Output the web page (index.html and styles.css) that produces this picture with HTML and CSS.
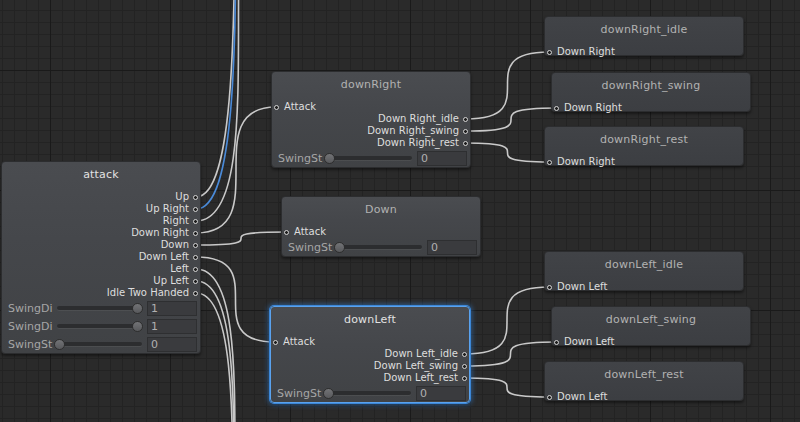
FILE: index.html
```html
<!DOCTYPE html>
<html>
<head>
<meta charset="utf-8">
<link rel="stylesheet" href="styles.css">
</head>
<body>
<div class="canvas">
  <svg class="wires" width="800" height="422" viewBox="0 0 800 422">
    <g fill="none" stroke="#c9c9c9" stroke-width="1.6" stroke-linecap="round">
      <path d="M196,197 C274,197 196,-500 274,-500"/>
      <path d="M196,221 C281,221 196,-179 281,-179"/>
      <path d="M196,233 C276,233 196,107 276,107"/>
      <path d="M196,245 C286,245 196,232 286,232"/>
      <path d="M196,257 C275,257 196,342 275,342"/>
      <path d="M196,269 C274,269 196,650 274,650"/>
      <path d="M196,281 C272,281 196,700 272,700"/>
      <path d="M196,293 C270,293 196,750 270,750"/>
      <path d="M466,119 C549,119 466,52 549,52"/>
      <path d="M466,131 C556,131 466,108 556,108"/>
      <path d="M466,143 C549,143 466,162 549,162"/>
      <path d="M465,354 C549,354 465,287 549,287"/>
      <path d="M465,366 C556,366 465,342 556,342"/>
      <path d="M465,378 C549,378 465,397 549,397"/>
    </g>
    <path d="M196,209 C276,209 196,-450 276,-450" fill="none" stroke="#4a8ad8" stroke-width="1.6"/>
  </svg>

  <div class="node mid n-attack">
    <div class="title bright">attack</div>
    <div class="ports">
      <div class="port out"><span>Up</span><i class="dot"></i></div>
      <div class="port out"><span>Up Right</span><i class="dot"></i></div>
      <div class="port out"><span>Right</span><i class="dot"></i></div>
      <div class="port out"><span>Down Right</span><i class="dot"></i></div>
      <div class="port out"><span>Down</span><i class="dot"></i></div>
      <div class="port out"><span>Down Left</span><i class="dot"></i></div>
      <div class="port out"><span>Left</span><i class="dot"></i></div>
      <div class="port out"><span>Up Left</span><i class="dot"></i></div>
      <div class="port out"><span>Idle Two Handed</span><i class="dot"></i></div>
    </div>
    <div class="prop"><span class="plabel">SwingDi</span><div class="slider"><div class="track"></div><div class="thumb v1"></div></div><div class="field">1</div></div>
    <div class="prop"><span class="plabel">SwingDi</span><div class="slider"><div class="track"></div><div class="thumb v1"></div></div><div class="field">1</div></div>
    <div class="prop"><span class="plabel">SwingSt</span><div class="slider"><div class="track"></div><div class="thumb v0"></div></div><div class="field">0</div></div>
  </div>

  <div class="node mid n-downright">
    <div class="title">downRight</div>
    <div class="ports">
      <div class="port in"><i class="dot"></i><span>Attack</span></div>
      <div class="port out"><span>Down Right_idle</span><i class="dot"></i></div>
      <div class="port out"><span>Down Right_swing</span><i class="dot"></i></div>
      <div class="port out"><span>Down Right_rest</span><i class="dot"></i></div>
    </div>
    <div class="prop"><span class="plabel">SwingSt</span><div class="slider"><div class="track"></div><div class="thumb v0"></div></div><div class="field">0</div></div>
  </div>

  <div class="node mid n-down">
    <div class="title">Down</div>
    <div class="ports">
      <div class="port in"><i class="dot"></i><span>Attack</span></div>
    </div>
    <div class="prop"><span class="plabel">SwingSt</span><div class="slider"><div class="track"></div><div class="thumb v0"></div></div><div class="field">0</div></div>
  </div>

  <div class="node mid n-downleft selected">
    <div class="title bright">downLeft</div>
    <div class="ports">
      <div class="port in"><i class="dot"></i><span>Attack</span></div>
      <div class="port out"><span>Down Left_idle</span><i class="dot"></i></div>
      <div class="port out"><span>Down Left_swing</span><i class="dot"></i></div>
      <div class="port out"><span>Down Left_rest</span><i class="dot"></i></div>
    </div>
    <div class="prop"><span class="plabel">SwingSt</span><div class="slider"><div class="track"></div><div class="thumb v0"></div></div><div class="field">0</div></div>
  </div>

  <div class="node leaf n-dr-idle">
    <div class="title">downRight_idle</div>
    <div class="ports"><div class="port in"><i class="dot"></i><span>Down Right</span></div></div>
  </div>
  <div class="node leaf n-dr-swing">
    <div class="title">downRight_swing</div>
    <div class="ports"><div class="port in"><i class="dot"></i><span>Down Right</span></div></div>
  </div>
  <div class="node leaf n-dr-rest">
    <div class="title">downRight_rest</div>
    <div class="ports"><div class="port in"><i class="dot"></i><span>Down Right</span></div></div>
  </div>
  <div class="node leaf n-dl-idle">
    <div class="title">downLeft_idle</div>
    <div class="ports"><div class="port in"><i class="dot"></i><span>Down Left</span></div></div>
  </div>
  <div class="node leaf n-dl-swing">
    <div class="title">downLeft_swing</div>
    <div class="ports"><div class="port in"><i class="dot"></i><span>Down Left</span></div></div>
  </div>
  <div class="node leaf n-dl-rest">
    <div class="title">downLeft_rest</div>
    <div class="ports"><div class="port in"><i class="dot"></i><span>Down Left</span></div></div>
  </div>
</div>
</body>
</html>
```

FILE: styles.css
```css
html, body {
  margin: 0;
  padding: 0;
  background: #2a2a2a;
}

.canvas {
  position: relative;
  width: 800px;
  height: 422px;
  overflow: hidden;
  font-family: "DejaVu Sans", "Liberation Sans", sans-serif;
  background-color: #2a2a2a;
  background-image:
    linear-gradient(to right, #1a1a1a 1px, transparent 1px),
    linear-gradient(to bottom, #1a1a1a 1px, transparent 1px),
    linear-gradient(to right, #232323 1px, transparent 1px),
    linear-gradient(to bottom, #232323 1px, transparent 1px);
  background-size: 120px 120px, 120px 120px, 12px 12px, 12px 12px;
  background-position: 50px 0, 0 70px, 2px 0, 0 10px;
}

.wires {
  position: absolute;
  left: 0;
  top: 0;
}

/* ---------- nodes ---------- */
.node {
  position: absolute;
  width: 200px;
  box-sizing: border-box;
  border: 1px solid #2c2d2f;
  border-radius: 4px;
  display: flex;
  flex-direction: column;
  box-shadow: 0 2px 3px rgba(0, 0, 0, 0.45);
}

.mid {
  background: linear-gradient(to bottom, #4a4c50 0%, #45474b 40%, #404245 100%);
}

.leaf {
  height: 40px;
  background: linear-gradient(to bottom, #414347 0%, #3c3e42 100%);
}

.selected {
  border-color: #5aa2ee;
  box-shadow: 0 0 0 1px #3b86d6, 0 0 5px 2px rgba(58, 140, 230, 0.5), 0 2px 3px rgba(0, 0, 0, 0.45);
}

.n-attack { left: 1px; top: 161px; }
.n-downright { left: 271px; top: 71px; }
.n-down { left: 281px; top: 196px; }
.n-downleft { left: 270px; top: 306px; }
.n-dr-idle { left: 544px; top: 16px; }
.n-dr-swing { left: 551px; top: 72px; }
.n-dr-rest { left: 544px; top: 126px; }
.n-dl-idle { left: 544px; top: 251px; }
.n-dl-swing { left: 551px; top: 306px; }
.n-dl-rest { left: 544px; top: 361px; }

.title {
  padding-top: 5px;
  height: 16px;
  line-height: 16px;
  margin-bottom: 8px;
  text-align: center;
  font-size: 11px;
  letter-spacing: 0.2px;
  color: #b2b2b2;
  white-space: nowrap;
}

.title.bright {
  color: #e2e2e2;
}

.ports {
  display: flex;
  flex-direction: column;
}

.port {
  height: 12px;
  line-height: 12px;
  font-size: 10px;
  color: #dedede;
  display: flex;
  align-items: center;
  white-space: nowrap;
}

.port.out {
  justify-content: flex-end;
  gap: 4px;
  padding-right: 2px;
}

.port.in {
  gap: 5px;
  padding-left: 2px;
}

.dot {
  display: block;
  width: 5px;
  height: 5px;
  box-sizing: border-box;
  border: 1px solid #d6d6d6;
  border-radius: 50%;
  background: #1e1e1e;
  flex: none;
}

/* ---------- property rows ---------- */
.prop {
  height: 18px;
  display: flex;
  align-items: center;
}

.plabel {
  width: 47px;
  padding-left: 6px;
  font-size: 11px;
  color: #a6a6a6;
  white-space: nowrap;
  overflow: hidden;
  flex: none;
}

.slider {
  position: relative;
  width: 87px;
  height: 10px;
  flex: none;
}

.track {
  position: absolute;
  left: 2px;
  right: 0;
  top: 3px;
  height: 4px;
  border-radius: 2px;
  background: #2c2d2f;
  box-shadow: 0 1px 0 rgba(255, 255, 255, 0.06);
}

.thumb {
  position: absolute;
  top: -0.5px;
  width: 11px;
  height: 11px;
  box-sizing: border-box;
  border-radius: 50%;
  border: 1px solid #2e2e2e;
  background: linear-gradient(to bottom, #727376, #58595c);
}

.thumb.v0 { left: -1px; }
.thumb.v1 { left: 77px; }

.field {
  margin-left: 5px;
  width: 50px;
  height: 15px;
  box-sizing: border-box;
  border: 1px solid #2e2f31;
  background: #3a3b3e;
  font-size: 11px;
  line-height: 13px;
  padding-left: 3px;
  color: #b0b0b0;
}
```
